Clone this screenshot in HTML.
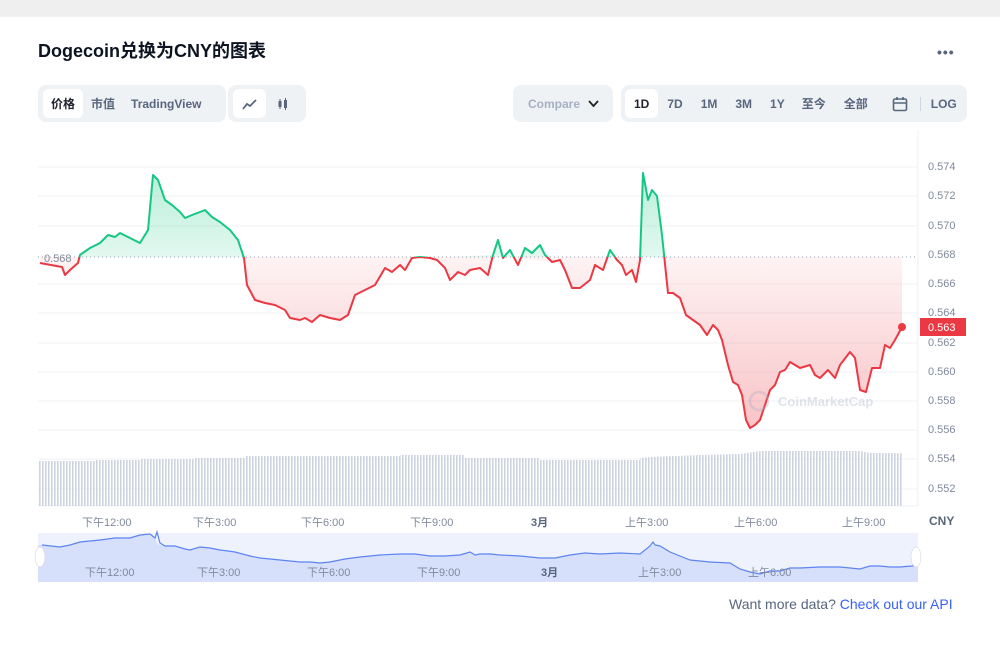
<!DOCTYPE html>
<html><head><meta charset="utf-8"><style>
*{margin:0;padding:0;box-sizing:border-box}
body{width:1000px;height:650px;background:#fff;font-family:"Liberation Sans","Noto Sans CJK SC",sans-serif;position:relative;overflow:hidden;color:#222531}
.top{position:absolute;left:0;top:0;width:1000px;height:17px;background:#efefef}
.title{position:absolute;left:38px;top:37px;font-size:18px;font-weight:bold;color:#0d1421}
.dots{position:absolute;left:937px;top:44px;font-size:14px;color:#58667e;letter-spacing:1px;font-weight:bold}
.grp{position:absolute;background:#eff2f5;border-radius:8px;height:37px;top:85px;display:flex;align-items:center;padding:0 5px}
.btn{height:29px;display:flex;align-items:center;padding:0 8px;font-size:12px;font-weight:bold;color:#58667e;border-radius:6px;white-space:nowrap;flex-shrink:0}
.act{background:#fff;color:#222531}
.ax{position:absolute;font-size:11px;color:#808a9d}
.bx{position:absolute;font-size:11px;color:#808a9d;top:514px}
</style></head><body>
<div class="top"></div>
<div class="title">Dogecoin兑换为CNY的图表</div>
<div class="dots">•••</div>
<div class="grp" style="left:38px;width:188px"><div class="btn act">价格</div><div class="btn">市值</div><div class="btn">TradingView</div></div>
<div class="grp" style="left:228px;width:78px"><div class="btn act" style="width:33px;justify-content:center"><svg width="16" height="12"><path d="M1 11 L5 6 L8 8 L14 2" stroke="#58667e" stroke-width="1.8" fill="none"/></svg></div><div class="btn" style="width:33px;justify-content:center"><svg width="12" height="14"><rect x="1.5" y="4" width="3" height="6" fill="#58667e"/><line x1="3" y1="2" x2="3" y2="12" stroke="#58667e"/><rect x="7" y="3" width="3" height="8" fill="#58667e"/><line x1="8.5" y1="1" x2="8.5" y2="13" stroke="#58667e"/></svg></div></div>
<div class="grp" style="left:513px;width:100px;padding-left:15px;font-size:12px;font-weight:bold;color:#a6b0c3">Compare <span style="margin-left:8px;color:#222"><svg width="11" height="8"><path d="M1 1 L5.5 6 L10 1" stroke="#222" stroke-width="1.8" fill="none"/></svg></span></div>
<div class="grp" style="left:621px;width:346px;padding-left:4px"><div class="btn act" style="padding:0 9px">1D</div><div class="btn" style="padding:0 9px">7D</div><div class="btn" style="padding:0 9px">1M</div><div class="btn" style="padding:0 9px">3M</div><div class="btn" style="padding:0 9px">1Y</div><div class="btn" style="padding:0 8px">至今</div><div class="btn" style="padding:0 10px">全部</div><div class="btn" style="padding:0 12px 0 14px"><svg width="16" height="16"><rect x="1.5" y="3" width="13" height="11.5" rx="1.5" stroke="#58667e" stroke-width="1.6" fill="none"/><line x1="1.5" y1="7" x2="14.5" y2="7" stroke="#58667e" stroke-width="1.5"/><line x1="5" y1="1" x2="5" y2="4" stroke="#58667e" stroke-width="1.6"/><line x1="11" y1="1" x2="11" y2="4" stroke="#58667e" stroke-width="1.6"/></svg></div><div style="width:1px;height:14px;background:#cfd6e4;flex-shrink:0"></div><div class="btn" style="padding:0 8px 0 10px">LOG</div></div>

<svg style="position:absolute;left:0;top:0" width="1000" height="650">
<defs>
<linearGradient id="gg" x1="0" y1="0" x2="0" y2="1"><stop offset="0" stop-color="#16c784" stop-opacity=".3"/><stop offset="1" stop-color="#16c784" stop-opacity=".03"/></linearGradient>
<linearGradient id="rg" x1="0" y1="0" x2="0" y2="1"><stop offset="0" stop-color="#ea3943" stop-opacity=".03"/><stop offset="1" stop-color="#ea3943" stop-opacity=".3"/></linearGradient>
<clipPath id="ca"><rect x="0" y="0" width="1000" height="257"/></clipPath>
<clipPath id="cb"><rect x="0" y="257" width="1000" height="300"/></clipPath>
<pattern id="vp" width="3" height="100" patternUnits="userSpaceOnUse"><rect width="1.6" height="100" fill="#cdd3df"/></pattern>
</defs>
<g stroke="#f1f2f5" stroke-width="1">
<line x1="38" y1="167" x2="918" y2="167"/><line x1="38" y1="196" x2="918" y2="196"/><line x1="38" y1="226" x2="918" y2="226"/><line x1="38" y1="284" x2="918" y2="284"/><line x1="38" y1="313" x2="918" y2="313"/><line x1="38" y1="343" x2="918" y2="343"/><line x1="38" y1="372" x2="918" y2="372"/><line x1="38" y1="401" x2="918" y2="401"/><line x1="38" y1="430" x2="918" y2="430"/><line x1="38" y1="459" x2="918" y2="459"/><line x1="38" y1="489" x2="918" y2="489"/>
</g>
<line x1="918" y1="130" x2="918" y2="506" stroke="#eff2f5"/>
<line x1="38" y1="506" x2="918" y2="506" stroke="#eff2f5"/>
<polygon fill="url(#vp)" points="38,461 95,461 95,460 140,460 140,459 195,459 195,458 245,458 245,456 400,456 400,455 465,455 465,458 540,458 540,460 640,460 640,458 650,457 700,455 740,454 760,451 860,451 870,453 902,453 902,506 38,506"/>
<line x1="38" y1="257" x2="918" y2="257" stroke="#9aa0ad" stroke-dasharray="1 3"/>
<g id="pl">
<polyline id="L" fill="none" stroke-width="2" stroke-linejoin="round" points="40,263 62,267 65,275 70,270 78,263 80,255 90,248 100,243 108,235 115,237 120,233 130,238 140,243 148,230 153,175 158,180 165,200 172,205 180,212 185,218 192,215 200,212 205,210 212,217 220,222 230,230 238,240 244,258 247,285 255,300 265,303 275,305 285,310 290,318 300,320 305,318 312,322 320,315 330,318 340,320 348,315 355,295 365,290 375,285 385,268 392,272 400,265 405,270 412,258 420,257 430,258 437,260 445,268 450,280 458,272 465,275 470,270 480,268 488,275 493,255 498,240 503,258 510,250 518,265 525,248 532,253 540,245 545,255 552,262 560,260 565,270 572,288 580,288 590,280 595,265 603,270 610,250 617,260 622,265 626,275 632,270 636,282 640,260 643,173 648,200 652,190 657,196 662,235 668,293 673,293 680,298 686,315 693,320 700,325 707,335 713,325 718,330 722,340 728,365 733,382 738,385 742,395 746,420 750,428 755,425 760,420 765,405 770,390 775,385 780,372 785,370 790,362 800,368 810,365 815,375 820,378 828,370 835,378 840,365 850,352 855,358 860,390 866,392 872,368 880,368 885,345 890,348 895,340 902,327"/>
</g>
<polygon clip-path="url(#ca)" fill="url(#gg)" points="40,257 40,263 62,267 65,275 70,270 78,263 80,255 90,248 100,243 108,235 115,237 120,233 130,238 140,243 148,230 153,175 158,180 165,200 172,205 180,212 185,218 192,215 200,212 205,210 212,217 220,222 230,230 238,240 244,258 247,285 412,258 420,257 430,258 493,255 498,240 503,258 510,250 518,265 525,248 532,253 540,245 545,255 603,270 610,250 617,260 636,282 640,260 643,173 648,200 652,190 657,196 662,235 668,293 902,300 902,257"/>
<polygon clip-path="url(#cb)" fill="url(#rg)" points="40,257 40,263 62,267 65,275 70,270 78,263 80,255 240,250 244,258 247,285 255,300 265,303 275,305 285,310 290,318 300,320 305,318 312,322 320,315 330,318 340,320 348,315 355,295 365,290 375,285 385,268 392,272 400,265 405,270 412,258 420,257 430,258 437,260 445,268 450,280 458,272 465,275 470,270 480,268 488,275 493,255 552,262 560,260 565,270 572,288 580,288 590,280 595,265 603,270 610,250 617,260 622,265 626,275 632,270 636,282 640,260 662,235 668,293 673,293 680,298 686,315 693,320 700,325 707,335 713,325 718,330 722,340 728,365 733,382 738,385 742,395 746,420 750,428 755,425 760,420 765,405 770,390 775,385 780,372 785,370 790,362 800,368 810,365 815,375 820,378 828,370 835,378 840,365 850,352 855,358 860,390 866,392 872,368 880,368 885,345 890,348 895,340 902,327 902,257"/>
<use href="#L" stroke="#16c784" clip-path="url(#ca)"/>
<use href="#L" stroke="#ea3943" clip-path="url(#cb)"/>
<circle cx="902" cy="327" r="4" fill="#ea3943"/>
<rect x="920" y="318" width="46" height="18" fill="#ea3943"/>
<text x="928" y="331" font-size="11" fill="#fff" font-family="Liberation Sans">0.563</text>
<text x="44" y="262" font-size="11" fill="#808a9d" font-family="Liberation Sans">0.568</text>
<g opacity=".35"><circle cx="759" cy="401" r="9" fill="none" stroke="#a6b0c3" stroke-width="2.5"/><text x="778" y="406" font-size="13" font-weight="bold" fill="#a6b0c3" font-family="Liberation Sans">CoinMarketCap</text></g>
<rect x="38" y="533" width="880" height="49" fill="#eef2fd"/>
<polygon fill="#d7e0fb" points="42,545 60,547 70,545 80,542 100,540 115,538 130,538 140,535 150,534 155,538 157,544 165,546 175,546 185,549 190,550 200,547 210,548 220,550 228,551 235,552 250,556 260,558 280,560 300,562 310,562 320,563 330,562 345,559 360,557 380,555 400,554 415,554 430,556 445,556 460,555 470,552 475,555 480,554 490,554 500,555 520,556 540,558 555,558 570,555 585,553 600,554 620,553 640,554 650,546 655,545 660,546 670,552 690,560 710,562 730,563 740,569 750,572 760,574 770,571 780,571 790,568 800,568 820,567 840,567 860,569 870,566 880,566 890,567 900,567 912,566 918,565 918,582 38,582 38,545"/>
<polyline fill="none" stroke="#5d84f0" stroke-width="1.2" points="42,545 60,547 70,545 80,542 100,540 115,538 130,538 140,535 150,534 155,538 157,532 160,543 165,546 175,546 185,549 190,550 200,547 210,548 220,550 228,551 235,552 250,556 260,558 280,560 300,562 310,562 320,563 330,562 345,559 360,557 380,555 400,554 415,554 430,556 445,556 460,555 470,552 475,555 480,554 490,554 500,555 520,556 540,558 555,558 570,555 585,553 600,554 620,553 640,554 650,546 653,542 655,545 660,546 670,552 690,560 710,562 730,563 740,569 750,572 760,574 770,571 780,571 790,568 800,568 820,567 840,567 860,569 870,566 880,566 890,567 900,567 912,566 918,565"/>
<ellipse cx="40" cy="557" rx="5" ry="10" fill="#fff" stroke="#ccd" stroke-width=".5"/>
<ellipse cx="916" cy="557" rx="5" ry="10" fill="#fff" stroke="#ccd" stroke-width=".5"/>
</svg>
<div class="ax" style="left:928px;top:161px">0.574</div>
<div class="ax" style="left:928px;top:190px">0.572</div>
<div class="ax" style="left:928px;top:220px">0.570</div>
<div class="ax" style="left:928px;top:249px">0.568</div>
<div class="ax" style="left:928px;top:278px">0.566</div>
<div class="ax" style="left:928px;top:307px">0.564</div>
<div class="ax" style="left:928px;top:337px">0.562</div>
<div class="ax" style="left:928px;top:366px">0.560</div>
<div class="ax" style="left:928px;top:395px">0.558</div>
<div class="ax" style="left:928px;top:424px">0.556</div>
<div class="ax" style="left:928px;top:453px">0.554</div>
<div class="ax" style="left:928px;top:483px">0.552</div>
<div class="bx" style="left:82px">下午12:00</div>
<div class="bx" style="left:193px">下午3:00</div>
<div class="bx" style="left:301px">下午6:00</div>
<div class="bx" style="left:410px">下午9:00</div>
<div class="bx" style="left:531px;font-weight:bold;color:#58667e">3月</div>
<div class="bx" style="left:625px">上午3:00</div>
<div class="bx" style="left:734px">上午6:00</div>
<div class="bx" style="left:842px">上午9:00</div>
<div class="bx" style="left:929px;font-weight:bold;color:#58667e;font-size:12px">CNY</div>
<div class="bx" style="left:85px;top:564px">下午12:00</div>
<div class="bx" style="left:197px;top:564px">下午3:00</div>
<div class="bx" style="left:307px;top:564px">下午6:00</div>
<div class="bx" style="left:417px;top:564px">下午9:00</div>
<div class="bx" style="left:541px;top:564px;font-weight:bold;color:#58667e">3月</div>
<div class="bx" style="left:638px;top:564px">上午3:00</div>
<div class="bx" style="left:748px;top:564px">上午6:00</div>
<div style="position:absolute;left:729px;top:596px;font-size:14px;color:#58667e">Want more data? <span style="color:#3861fb">Check out our API</span></div>
</body></html>
